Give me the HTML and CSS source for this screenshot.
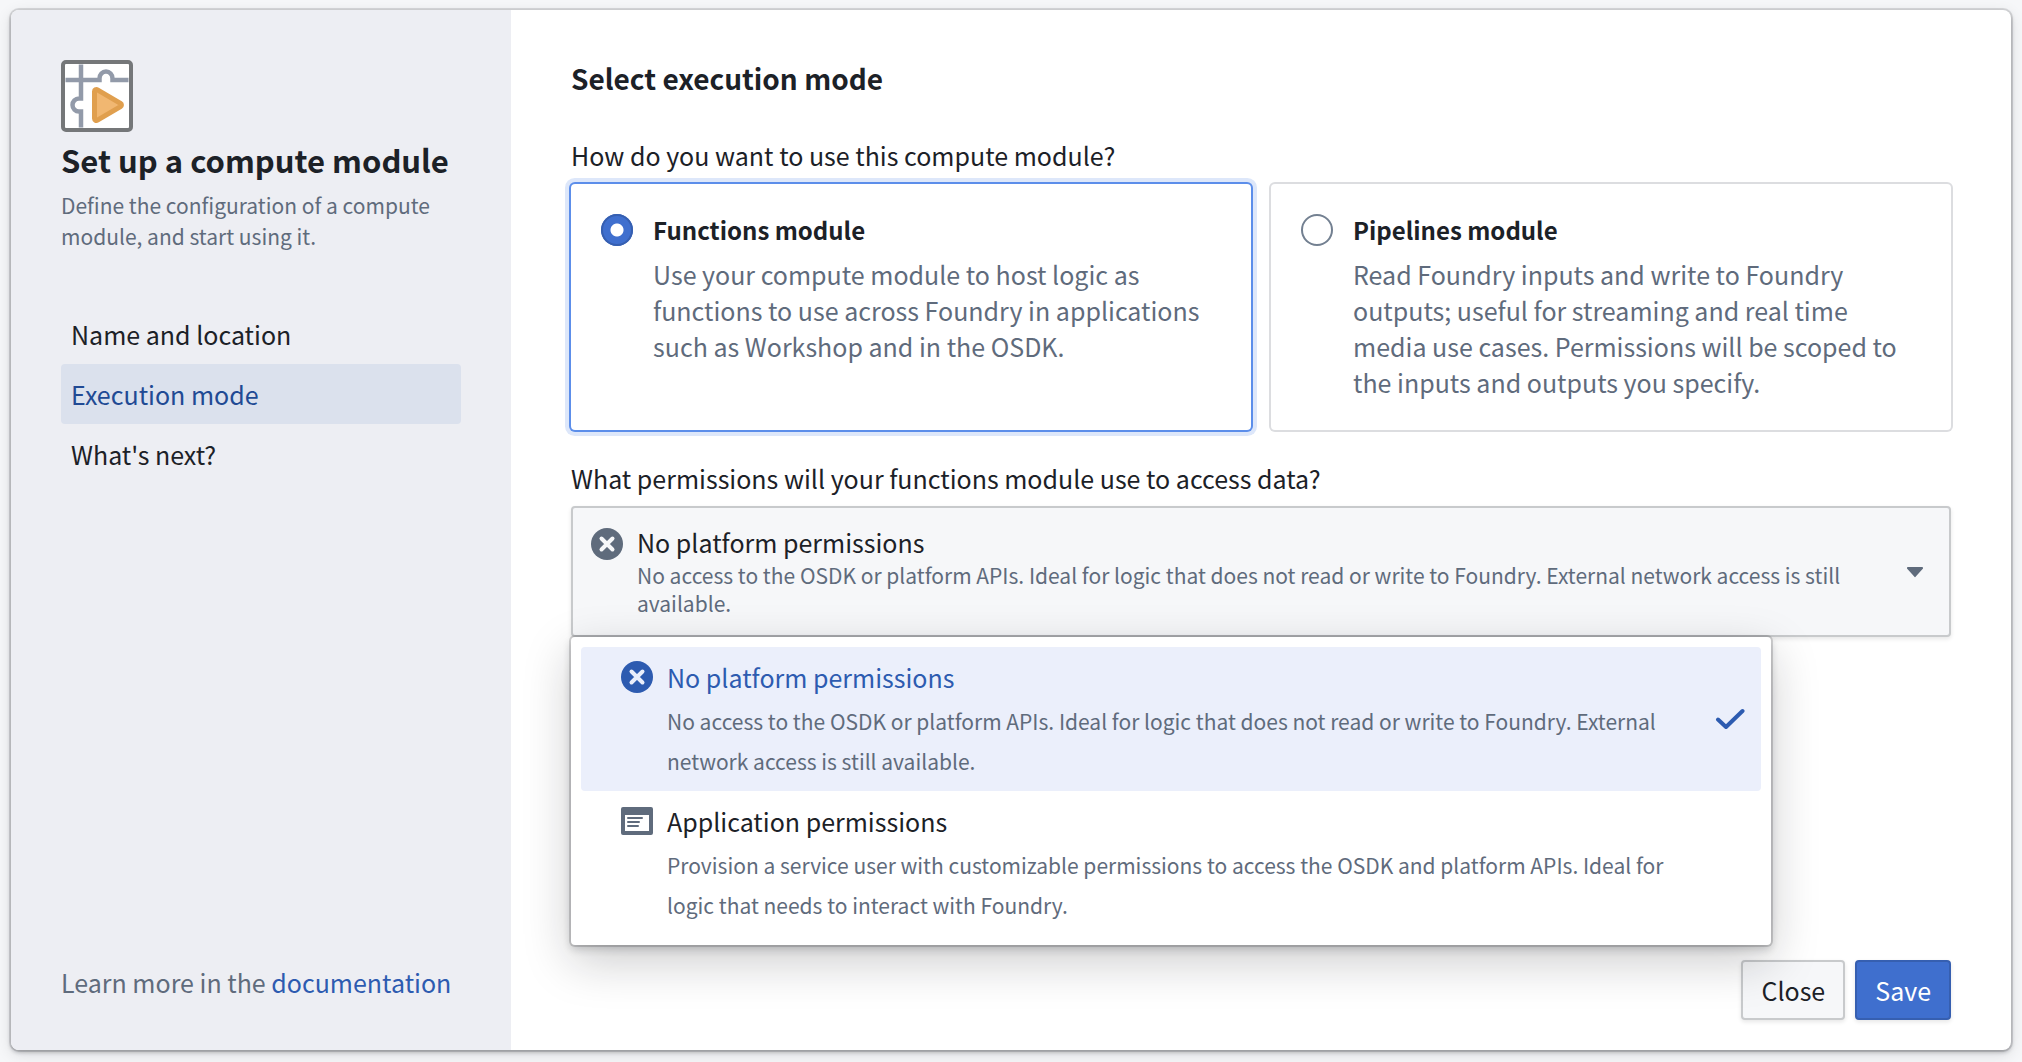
FILE: index.html
```html
<!DOCTYPE html>
<html lang="en">
<head>
<meta charset="utf-8">
<meta name="viewport" content="width=device-width, initial-scale=1">
<title>Set up a compute module</title>
<link rel="stylesheet" href="styles.css">
</head>
<body>
<main class="dialog">
  <aside class="sidebar">
    <svg class="module-icon" viewBox="0 0 72 72" aria-hidden="true">
      <rect x="2" y="2" width="68" height="68" rx="3" fill="#fff" stroke="#757779" stroke-width="4"/>
      <path d="M4.500 20H38.500V18.500a6.500 7 0 0 1 13 0V20H67.500M20 4.500V38.500H18a6.500 6.500 0 0 0 0 13H20V67.500" fill="none" stroke="#929aa9" stroke-width="4.500"/>
      <path d="M33.500 31.500v27a2 2 0 0 0 3 1.700l23-13.500a2 2 0 0 0 0-3.400l-23-13.500a2 2 0 0 0-3 1.700z" fill="#f1b771" stroke="#e09f4e" stroke-width="5" stroke-linejoin="round"/>
    </svg>
    <h1 class="sidebar-title">Set up a compute module</h1>
    <p class="sidebar-text">Define the configuration of a compute module, and start using it.</p>
    <nav class="steps" aria-label="Setup steps">
      <a class="step" href="#name">Name and location</a>
      <a class="step step-active" href="#execution" aria-current="step">Execution mode</a>
      <a class="step" href="#next">What's next?</a>
    </nav>
    <p class="learn-more">Learn more in the <a class="link" href="#documentation">documentation</a></p>
  </aside>

  <form class="content">
    <h2 class="heading">Select execution mode</h2>

    <fieldset class="field">
      <legend class="question">How do you want to use this compute module?</legend>
      <div class="cards">
        <label class="card card-selected">
          <input class="radio" type="radio" name="mode" value="functions" checked>
          <span class="card-body">
            <span class="card-title">Functions module</span>
            <span class="card-text">Use your compute module to host logic as functions to use across Foundry in applications such as Workshop and in the OSDK.</span>
          </span>
        </label>
        <label class="card">
          <input class="radio" type="radio" name="mode" value="pipelines">
          <span class="card-body">
            <span class="card-title">Pipelines module</span>
            <span class="card-text">Read Foundry inputs and write to Foundry outputs; useful for streaming and real time media use cases. Permissions will be scoped to the inputs and outputs you specify.</span>
          </span>
        </label>
      </div>
    </fieldset>

    <div class="permissions">
      <div class="question" id="permissions-label">What permissions will your functions module use to access data?</div>
      <div class="select">
        <button class="select-button" type="button" aria-haspopup="listbox" aria-expanded="true" aria-labelledby="permissions-label permissions-value">
          <svg class="icon" viewBox="0 0 32 32" aria-hidden="true"><circle cx="16" cy="16" r="16" fill="currentColor"/><path d="M10.500 10.500l11 11M21.500 10.500l-11 11" stroke="#f6f7f9" stroke-width="4" stroke-linecap="round"/></svg>
          <span class="select-body">
            <span class="select-title" id="permissions-value">No platform permissions</span>
            <span class="select-text">No access to the OSDK or platform APIs. Ideal for logic that does not read or write to Foundry. External network access is still available.</span>
          </span>
          <svg class="caret" viewBox="0 0 16 16" aria-hidden="true"><path d="M1 4h14a1 1 0 0 1 .8 1.700L8.800 13.600a1 1 0 0 1-1.600 0L.2 5.700A1 1 0 0 1 1 4z" fill="currentColor"/></svg>
        </button>
        <ul class="menu" role="listbox" aria-labelledby="permissions-label">
          <li class="option option-selected" role="option" aria-selected="true">
            <svg class="icon" viewBox="0 0 32 32" aria-hidden="true"><circle cx="16" cy="16" r="16" fill="currentColor"/><path d="M10.500 10.500l11 11M21.500 10.500l-11 11" stroke="#ebeffb" stroke-width="4" stroke-linecap="round"/></svg>
            <span class="option-body">
              <span class="option-title">No platform permissions</span>
              <span class="option-text">No access to the OSDK or platform APIs. Ideal for logic that does not read or write to Foundry. External network access is still available.</span>
            </span>
            <svg class="tick" viewBox="0 0 30 22" aria-hidden="true"><path d="M3 11.500l8 7.500L27.500 3" fill="none" stroke="currentColor" stroke-width="4" stroke-linecap="round" stroke-linejoin="round"/></svg>
          </li>
          <li class="option" role="option" aria-selected="false">
            <svg class="icon" viewBox="0 0 32 32" aria-hidden="true"><path fill="currentColor" fill-rule="evenodd" d="M2 2h28a2 2 0 0 1 2 2v24a2 2 0 0 1-2 2H2a2 2 0 0 1-2-2V4a2 2 0 0 1 2-2zM4 10v16h24V10z"/><path d="M7 13h14M7 17h11M7 21h10" stroke="currentColor" stroke-width="2" stroke-linecap="round"/></svg>
            <span class="option-body">
              <span class="option-title">Application permissions</span>
              <span class="option-text">Provision a service user with customizable permissions to access the OSDK and platform APIs. Ideal for logic that needs to interact with Foundry.</span>
            </span>
          </li>
        </ul>
      </div>
    </div>

    <div class="actions">
      <button class="button" type="button">Close</button>
      <button class="button button-primary" type="submit">Save</button>
    </div>
  </form>
</main>
</body>
</html>
```
FILE: styles.css
```css
* {
  box-sizing: border-box;
}

body {
  margin: 0;
  min-height: 100vh;
  padding: 10px 11px 12px;
  display: flex;
  background: #f6f7f9;
  color: #1c2127;
  font-family: "Noto Sans CJK SC", "Noto Sans", sans-serif;
  font-size: 25px;
  line-height: 36px;
}

h1, h2, p, ul, fieldset {
  margin: 0;
  padding: 0;
  border: 0;
  list-style: none;
}

button {
  font: inherit;
  color: inherit;
  cursor: pointer;
}

.dialog {
  flex: 1;
  display: flex;
  min-width: 0;
  border-radius: 8px;
  background: #fff;
  box-shadow: 0 0 0 2px rgba(17, 20, 24, 0.12), 0 2px 4px rgba(17, 20, 24, 0.3), 0 4px 16px rgba(17, 20, 24, 0.12);
}

/* Sidebar */
.sidebar {
  flex: 0 0 500px;
  display: flex;
  flex-direction: column;
  padding: 50px;
  border-radius: 8px 0 0 8px;
  background: #edeef3;
}

.module-icon {
  width: 72px;
  height: 72px;
}

.sidebar-title {
  margin-top: 8px;
  font-size: 31px;
  line-height: 40px;
}

.sidebar-text {
  margin-top: 10px;
  color: #5f6b7c;
  font-size: 21px;
  line-height: 31px;
}

.steps {
  display: flex;
  flex-direction: column;
  margin-top: 52px;
}

.step {
  padding: 12px 10px;
  border-radius: 4px;
  color: inherit;
  text-decoration: none;
}

.step-active {
  background: #dbe1ed;
  color: #214a94;
}

.learn-more {
  margin-top: auto;
  color: #5f6b7c;
}

.link {
  color: #2d5bb0;
  text-decoration: none;
}

/* Main column */
.content {
  flex: 1;
  min-width: 0;
  display: flex;
  flex-direction: column;
  padding: 50px 60px 30px;
}

.heading {
  font-size: 28px;
  line-height: 36px;
}

.field {
  min-width: 0;
  margin-top: 41px;
}

.permissions {
  margin-top: 30px;
}

.question {
  padding: 0;
}

.cards {
  display: grid;
  grid-template-columns: 1fr 1fr;
  gap: 20px;
  margin-top: 11px;
}

.card {
  display: flex;
  gap: 20px;
  padding: 28px 30px 30px;
  border-radius: 4px;
  box-shadow: 0 0 0 2px #dcdde0;
}

.card-selected {
  box-shadow: 0 0 0 2px #5c8eea, 0 0 0 6px #dde7fa;
}

.radio {
  appearance: none;
  flex: none;
  width: 32px;
  height: 32px;
  margin: 2px 0 0;
  border-radius: 50%;
  box-shadow: inset 0 0 0 2px #738091;
}

.radio:checked {
  background: radial-gradient(circle, #fff 6px, #3f6fce 7px);
  box-shadow: inset 0 0 0 2px #365fb0;
}

.card-body,
.select-body,
.option-body {
  flex: 1;
  min-width: 0;
  display: flex;
  flex-direction: column;
}

.card-title {
  font-size: 24px;
  font-weight: 700;
}

.card-text {
  margin-top: 8px;
  color: #5f6b7c;
}

/* Permission picker */
.select {
  position: relative;
  margin-top: 10px;
}

.select-button {
  width: 100%;
  display: flex;
  align-items: flex-start;
  gap: 14px;
  padding: 16px 26px 18px 18px;
  border: 2px solid #c8cacc;
  border-radius: 4px;
  background: #f6f7f9;
  box-shadow: 0 2px 4px rgba(17, 20, 24, 0.1);
  text-align: left;
}

.icon {
  flex: none;
  width: 32px;
  height: 32px;
  margin-top: 4px;
  color: #5f6b7c;
}

.select-text {
  margin-top: 1px;
  color: #5f6b7c;
  font-size: 21px;
  line-height: 28px;
}

.caret {
  flex: none;
  align-self: center;
  width: 16px;
  height: 16px;
  margin-left: 16px;
  color: #5f6b7c;
}

.menu {
  position: absolute;
  z-index: 1;
  top: 100%;
  left: 0;
  width: 1200px;
  max-width: 100%;
  padding: 10px;
  border-radius: 4px;
  background: #fff;
  box-shadow: 0 0 0 2px rgba(17, 20, 24, 0.16), 0 4px 8px rgba(17, 20, 24, 0.2), 0 16px 48px rgba(17, 20, 24, 0.22);
}

.option {
  display: grid;
  grid-template-columns: 32px 1fr 44px;
  align-items: start;
  gap: 14px;
  padding: 10px 16px 10px 40px;
  border-radius: 4px;
}

.option-selected {
  background: #ebeffb;
}

.option-title {
  line-height: 40px;
}

.option-text {
  margin-top: 4px;
  color: #5f6b7c;
  font-size: 21px;
  line-height: 40px;
}

.option-selected .icon,
.option-selected .option-title,
.tick {
  color: #2d5bb0;
}

.tick {
  align-self: center;
  justify-self: end;
  width: 30px;
  height: 22px;
}

/* Footer */
.actions {
  display: flex;
  justify-content: flex-end;
  gap: 10px;
  margin-top: auto;
}

.button {
  padding: 10px 18px;
  border: 2px solid #c8cacc;
  border-radius: 4px;
  background: #f6f7f9;
  box-shadow: 0 2px 4px rgba(17, 20, 24, 0.1);
}

.button-primary {
  border-color: #365fb0;
  background: #3f6fce;
  color: #fff;
}
```
